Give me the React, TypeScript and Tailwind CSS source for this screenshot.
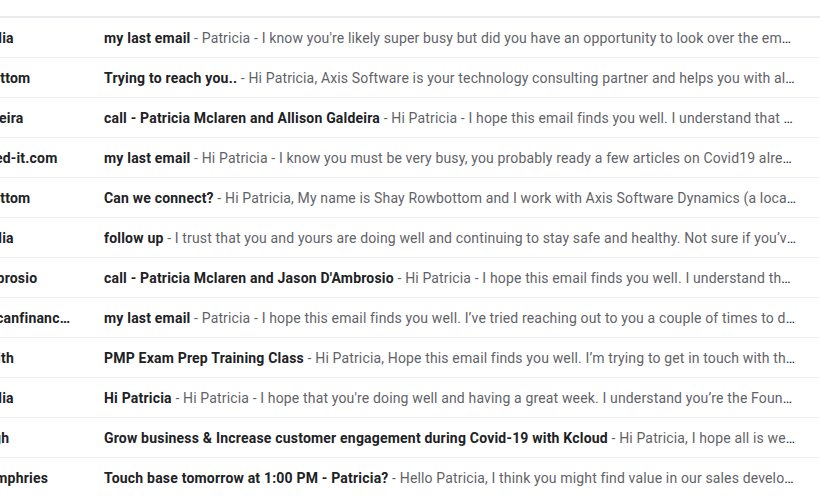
import React from 'react';

interface Mail {
  sender: string;
  subject: string;
  snippet: string;
}

const mails: Mail[] = [
  { sender: 'Mariah Cecilia', subject: 'my last email', snippet: "Patricia - I know you're likely super busy but did you have an opportunity to look over the email I sent last week?" },
  { sender: 'Shay Rowbottom', subject: 'Trying to reach you..', snippet: 'Hi Patricia, Axis Software is your technology consulting partner and helps you with all your software needs' },
  { sender: 'Allison Galdeira', subject: 'call - Patricia Mclaren and Allison Galdeira', snippet: 'Hi Patricia - I hope this email finds you well. I understand that you are busy running your company' },
  { sender: 'info@secured-it.com', subject: 'my last email', snippet: 'Hi Patricia - I know you must be very busy, you probably ready a few articles on Covid19 already this week' },
  { sender: 'Shay Rowbottom', subject: 'Can we connect?', snippet: 'Hi Patricia, My name is Shay Rowbottom and I work with Axis Software Dynamics (a local software company)' },
  { sender: 'Mariah Cecilia', subject: 'follow up', snippet: 'I trust that you and yours are doing well and continuing to stay safe and healthy. Not sure if you’ve had a chance' },
  { sender: "Jason D'Ambrosio", subject: "call - Patricia Mclaren and Jason D'Ambrosio", snippet: 'Hi Patricia - I hope this email finds you well. I understand that you are busy running your company' },
  { sender: 'info@americanfinancial.com', subject: 'my last email', snippet: 'Patricia - I hope this email finds you well. I’ve tried reaching out to you a couple of times to discuss' },
  { sender: 'Michael Smith', subject: 'PMP Exam Prep Training Class', snippet: 'Hi Patricia, Hope this email finds you well. I’m trying to get in touch with the right person' },
  { sender: 'Mariah Cecilia', subject: 'Hi Patricia', snippet: "Hi Patricia - I hope that you're doing well and having a great week. I understand you’re the Founder of your company" },
  { sender: 'Rakesh Singh', subject: 'Grow business & Increase customer engagement during Covid-19 with Kcloud', snippet: 'Hi Patricia, I hope all is well with you and your family' },
  { sender: 'Thomas Humphries', subject: 'Touch base tomorrow at 1:00 PM - Patricia?', snippet: 'Hello Patricia, I think you might find value in our sales development services' },
];

export default function App() {
  return (
    <div className="w-[820px] h-[497px] overflow-hidden bg-white font-['Roboto','Liberation_Sans',sans-serif] text-[14px] text-[#202124]">
      <div className="h-[18px] border-b-2 border-[#e8eaed]" />
      <div>
        {mails.map((m, i) => (
          <div key={i} className="flex items-center h-10 pt-[2px] border-b border-[#eef0f2]">
            <div className="ml-[-79px] w-[151px] shrink-0 truncate font-bold tracking-[0.2px]">{m.sender}</div>
            <div className="ml-8 pr-[22px] min-w-0 flex-1 truncate tracking-[0.15px]">
              <span className="font-bold tracking-[0.2px]">{m.subject}</span>
              <span className="text-[#5f6368]"> - {m.snippet}</span>
            </div>
          </div>
        ))}
      </div>
    </div>
  );
}
